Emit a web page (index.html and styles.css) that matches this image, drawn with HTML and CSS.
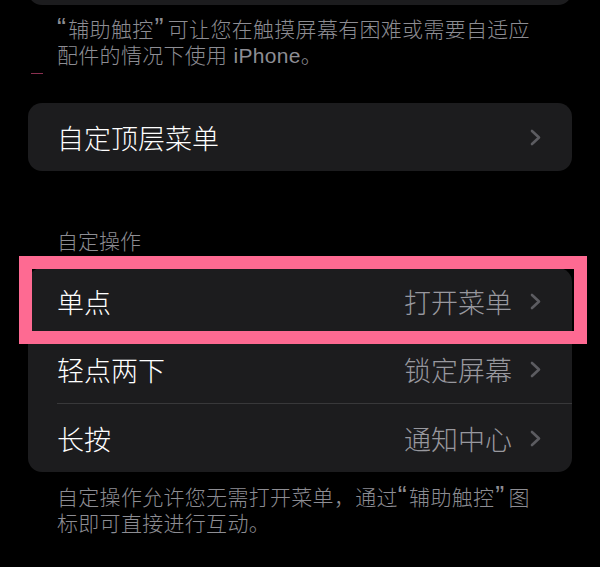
FILE: index.html
```html
<!DOCTYPE html>
<html lang="zh-CN">
<head>
<meta charset="utf-8">
<title>辅助触控</title>
<link rel="stylesheet" href="styles.css">
</head>
<body>
<div class="page">
  <div class="card stub"></div>
  <p class="note"><span class="q q-open">“</span>辅助触控<span class="q q-close">”</span>可让您在触摸屏幕有困难或需要自适应<br>配件的情况下使用 iPhone。</p>
  <div class="mark"></div>

  <div class="card single">
    <div class="row">
      <div class="row-inner">
        <span class="label">自定顶层菜单</span>
        <svg class="chev" viewBox="0 0 11 17" width="11" height="17"><polyline points="2,2 9,8.5 2,15"/></svg>
      </div>
    </div>
  </div>

  <div class="section-title">自定操作</div>

  <div class="card group">
    <div class="highlight"></div>
    <div class="row">
      <div class="row-inner">
        <span class="label">单点</span>
        <span class="value">打开菜单</span>
        <svg class="chev" viewBox="0 0 11 17" width="11" height="17"><polyline points="2,2 9,8.5 2,15"/></svg>
      </div>
    </div>
    <div class="row">
      <div class="row-inner">
        <span class="label">轻点两下</span>
        <span class="value">锁定屏幕</span>
        <svg class="chev" viewBox="0 0 11 17" width="11" height="17"><polyline points="2,2 9,8.5 2,15"/></svg>
      </div>
    </div>
    <div class="row">
      <div class="row-inner">
        <span class="label">长按</span>
        <span class="value">通知中心</span>
        <svg class="chev" viewBox="0 0 11 17" width="11" height="17"><polyline points="2,2 9,8.5 2,15"/></svg>
      </div>
    </div>
  </div>

  <p class="note note-bottom">自定操作允许您无需打开菜单，通过<span class="q q-open">“</span>辅助触控<span class="q q-close">”</span>图<br>标即可直接进行互动。</p>
</div>
</body>
</html>
```

FILE: styles.css
```css
html, body {
  margin: 0;
  padding: 0;
  background: #000;
}
body {
  font-family: "Liberation Sans", "Noto Sans CJK SC", sans-serif;
  font-weight: 300;
  color: #fff;
  overflow: hidden;
}
.page {
  width: 600px;
  height: 567px;
  box-sizing: border-box;
  padding: 0 28px;
  display: flex;
  flex-direction: column;
}
.card {
  background: #1c1c1e;
  border-radius: 14px;
  position: relative;
}
.stub {
  height: 35px;
  margin-top: -30px;
  flex: none;
}
.note {
  margin: 12px 0 0;
  padding-left: 29px;
  font-size: 21px;
  line-height: 26px;
  color: #8d8d93;
  white-space: nowrap;
  letter-spacing: 0.3px;
}
.q {
  font-size: 27px;
  line-height: 0;
}
.q-open {
  margin: 0 2px 0 0;
}
.q-close {
  margin: 0 4px 0 1px;
}
.note-bottom {
  margin-top: 13px;
}
.mark {
  flex: none;
  margin: 4px 0 0 3px;
  width: 12px;
  height: 1px;
  background: #8a3050;
}
.single {
  margin-top: 29px;
}
.single .row-inner {
  height: 69px;
  border-bottom: none;
}
.section-title {
  margin-top: 58px;
  padding-left: 29px;
  font-size: 21px;
  line-height: 26px;
  color: #8d8d93;
}
.group {
  margin-top: 13px;
}
.row {
  padding-left: 29px;
}
.row-inner {
  height: 67px;
  display: flex;
  align-items: center;
  padding-right: 31px;
  border-bottom: 1px solid #38383a;
}
.row:last-child .row-inner {
  border-bottom: none;
  height: 68px;
}
.label {
  font-size: 27px;
  flex: 1;
  color: #fff;
}
.value {
  font-size: 27px;
  color: #98989e;
  margin-right: 18px;
}
.chev {
  flex: none;
  fill: none;
  stroke: #5c5c61;
  stroke-width: 2.6;
  stroke-linecap: round;
  stroke-linejoin: round;
}
.highlight {
  position: absolute;
  top: -12px;
  left: -9px;
  width: 568px;
  height: 88px;
  box-sizing: border-box;
  border: 13px solid #fe6a92;
  z-index: 2;
}
```
